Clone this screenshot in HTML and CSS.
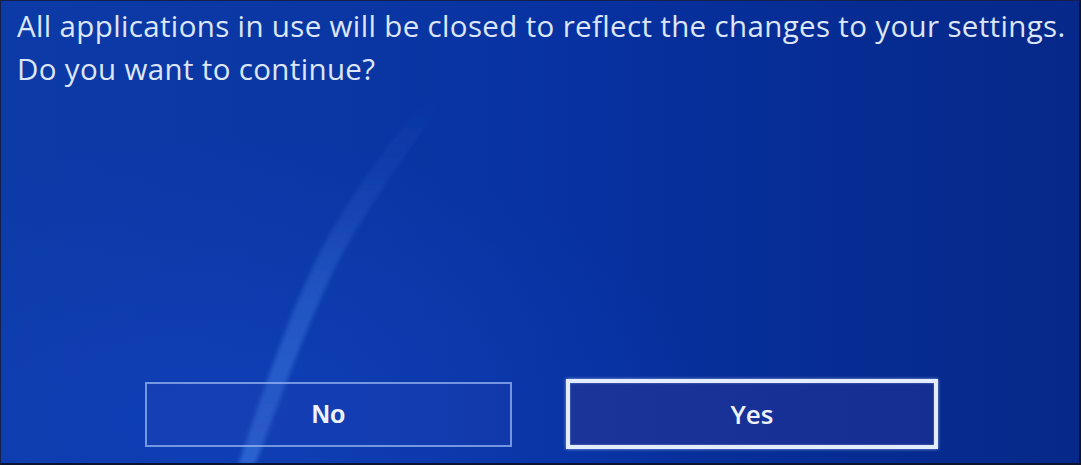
FILE: index.html
```html
<!DOCTYPE html>
<html>
<head>
<meta charset="utf-8">
<link rel="stylesheet" href="styles.css">
</head>
<body>
<div class="screen">
  <svg class="streak" width="1081" height="465" viewBox="0 0 1081 465" aria-hidden="true">
    <defs>
      <linearGradient id="sg" x1="0" y1="1" x2="0" y2="0">
        <stop offset="0" stop-color="#2f6ad6" stop-opacity="0.85"/>
        <stop offset="0.45" stop-color="#2f66d0" stop-opacity="0.6"/>
        <stop offset="0.8" stop-color="#2a5cc4" stop-opacity="0.2"/>
        <stop offset="1" stop-color="#2a5cc4" stop-opacity="0"/>
      </linearGradient>
      <filter id="bl"><feGaussianBlur stdDeviation="2.2"/></filter>
    </defs>
    <path d="M238 465 C257 410 292 300 332 230 C362 180 397 130 432 95 L445 100 C415 140 380 190 350 240 C315 300 280 400 255 465 Z" fill="url(#sg)" filter="url(#bl)"/>
  </svg>
  <div class="message">
    <p>All applications in use will be closed to reflect the changes to your settings.</p>
    <p>Do you want to continue?</p>
  </div>
  <div class="buttons">
    <div class="btn btn-no">No</div>
    <div class="btn btn-yes">Yes</div>
  </div>
</div>
</body>
</html>
```

FILE: styles.css
```css
html, body {
  margin: 0;
  padding: 0;
  background: #101a3a;
}
.screen {
  position: relative;
  box-sizing: border-box;
  width: 1081px;
  height: 465px;
  border-top: 1px solid #14204a;
  border-left: 1px solid #14204a;
  border-right: 2px solid #0c1430;
  border-bottom: 2px solid #0c1430;
  background:
    radial-gradient(ellipse 700px 400px at 20% 90%, rgba(20, 70, 200, 0.5), rgba(20, 70, 200, 0) 70%),
    linear-gradient(90deg, #0c3aa6 0%, #0a36a4 35%, #0731a0 55%, #062c92 80%, #06288a 100%);
  display: flex;
  flex-direction: column;
  overflow: hidden;
  font-family: "Open Sans", "DejaVu Sans", sans-serif;
  color: #dde6f8;
}
.streak {
  position: absolute;
  left: -1px;
  top: -1px;
  pointer-events: none;
}
.message {
  position: relative;
  padding: 3px 0 0 16px;
}
.message p {
  margin: 0;
  font-size: 29.5px;
  line-height: 43px;
  letter-spacing: 0.35px;
}
.buttons {
  position: relative;
  margin-top: auto;
  margin-bottom: 14px;
  display: flex;
  align-items: center;
  gap: 54px;
  padding-left: 144px;
}
.btn {
  box-sizing: border-box;
  display: flex;
  align-items: center;
  justify-content: center;
  font-family: "Liberation Sans", Arial, sans-serif;
  font-size: 25px;
  color: #eef3ff;
}
.btn-no {
  width: 367px;
  height: 65px;
  border: 2px solid rgba(160, 188, 245, 0.7);
  background: rgba(40, 70, 180, 0.22);
  font-weight: bold;
}
.btn-yes {
  width: 372px;
  height: 70px;
  border: 4px solid #e4ecff;
  box-shadow: 0 0 3px rgba(200, 220, 255, 0.7), inset 0 0 2px rgba(200, 220, 255, 0.6);
  background: linear-gradient(90deg, #1a349a, #142e92);
  font-family: "Open Sans", "DejaVu Sans", sans-serif;
  font-weight: 600;
  font-size: 26px;
}
```
